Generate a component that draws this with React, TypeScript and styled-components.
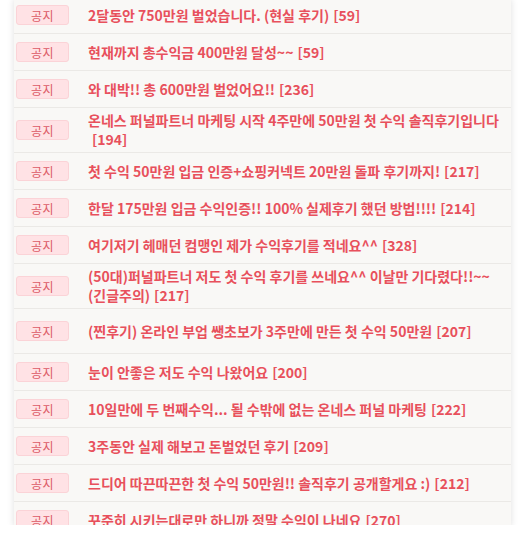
import React from 'react';
import styled, { createGlobalStyle } from 'styled-components';

interface Notice {
  title: string;
  count: number;
  tall?: boolean;
}

const notices: Notice[] = [
  { title: '2달동안 750만원 벌었습니다. (현실 후기)', count: 59 },
  { title: '현재까지 총수익금 400만원 달성~~', count: 59 },
  { title: '와 대박!! 총 600만원 벌었어요!!', count: 236 },
  { title: '온네스 퍼널파트너 마케팅 시작 4주만에 50만원 첫 수익 솔직후기입니다', count: 194 },
  { title: '첫 수익 50만원 입금 인증+쇼핑커넥트 20만원 돌파 후기까지!', count: 217 },
  { title: '한달 175만원 입금 수익인증!! 100% 실제후기 했던 방법!!!!', count: 214 },
  { title: '여기저기 헤매던 컴맹인 제가 수익후기를 적네요^^', count: 328 },
  { title: '(50대)퍼널파트너 저도 첫 수익 후기를 쓰네요^^ 이날만 기다렸다!!~~ (긴글주의)', count: 217 },
  { title: '(찐후기) 온라인 부업 쌩초보가 3주만에 만든 첫 수익 50만원', count: 207, tall: true },
  { title: '눈이 안좋은 저도 수익 나왔어요', count: 200 },
  { title: '10일만에 두 번째수익... 될 수밖에 없는 온네스 퍼널 마케팅', count: 222 },
  { title: '3주동안 실제 해보고 돈벌었던 후기', count: 209 },
  { title: '드디어 따끈따끈한 첫 수익 50만원!! 솔직후기 공개할게요 :)', count: 212 },
  { title: '꾸준히 시키는대로만 하니까 정말 수익이 나네요', count: 270 },
];

const GlobalStyle = createGlobalStyle`
  html, body {
    margin: 0;
    padding: 0;
    background: #ffffff;
    overflow: hidden;
  }
  body {
    font-family: "Noto Sans CJK KR", "Noto Sans", sans-serif;
  }
`;

const Page = styled.div`
  padding: 0 16px 0 14px;
`;

const Panel = styled.ul`
  list-style: none;
  margin: -3px 0 0;
  padding: 0;
  height: 528px;
  overflow: hidden;
  background: #f9f8f6;
  box-shadow: 0 2px 7px rgba(0, 0, 0, 0.13);
`;

const Row = styled.li<{ $tall?: boolean }>`
  display: flex;
  align-items: center;
  min-height: ${({ $tall }) => ($tall ? 38 : 30)}px;
  padding: 3px 0 3px 2px;
  border-bottom: 1px solid #ebe9e6;
  overflow: hidden;
`;

const Badge = styled.span`
  flex: none;
  box-sizing: border-box;
  width: 53px;
  height: 20px;
  display: flex;
  align-items: center;
  justify-content: center;
  background: #ffe2e5;
  border: 1px solid #fbd3d7;
  border-radius: 3px;
  color: #dc5a65;
  font-size: 12px;
  letter-spacing: 0.5px;
`;

const Title = styled.a`
  flex: none;
  width: 440px;
  margin-left: 19px;
  color: #e8505c;
  font-size: 14px;
  font-weight: 700;
  line-height: 19px;
  word-break: keep-all;
  text-decoration: none;
  cursor: pointer;
`;

const Count = styled.span`
  display: inline-block;
  padding-left: 4px;
`;

export default function App() {
  return (
    <Page>
      <GlobalStyle />
      <Panel>
        {notices.map((n, i) => (
          <Row key={i} $tall={n.tall}>
            <Badge>공지</Badge>
            <Title>
              {n.title}
              <Count>[{n.count}]</Count>
            </Title>
          </Row>
        ))}
      </Panel>
    </Page>
  );
}
